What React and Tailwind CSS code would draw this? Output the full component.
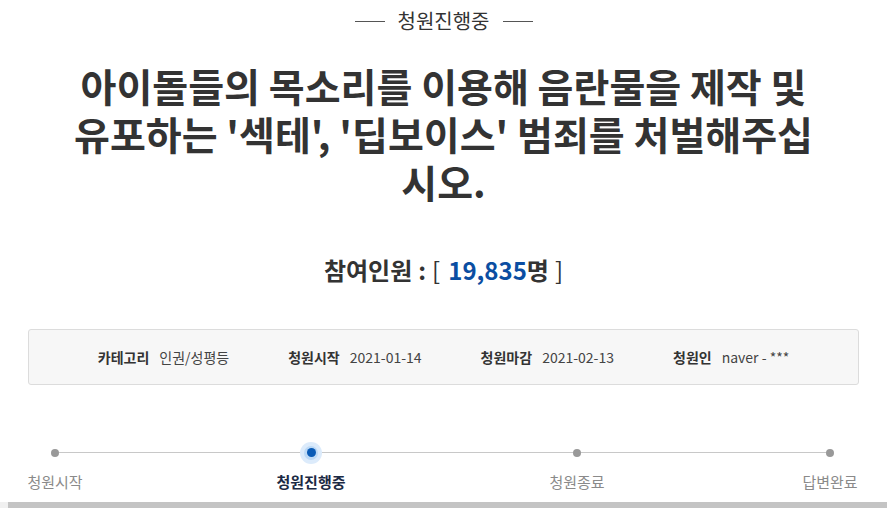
const steps = [
  { label: '청원시작', state: 'done', ml: 'ml-[17px]' },
  { label: '청원진행중', state: 'active', ml: 'ml-[180px]' },
  { label: '청원종료', state: 'todo', ml: 'ml-[190px]' },
  { label: '답변완료', state: 'todo', ml: 'ml-[177px]' },
];

const info = [
  { k: '카테고리', v: '인권/성평등' },
  { k: '청원시작', v: '2021-01-14' },
  { k: '청원마감', v: '2021-02-13' },
  { k: '청원인', v: 'naver - ***' },
];

export default function App() {
  return (
    <div
      className="w-[887px] h-[508px] overflow-hidden bg-white text-[#333]"
      style={{ fontFamily: '"Noto Sans CJK KR", "Noto Sans", sans-serif' }}
    >
      {/* status */}
      <div className="flex items-center justify-center gap-[13px] pt-[6px] h-[36px]">
        <span className="w-[30px] h-px bg-[#555]" />
        <span className="text-[20px] leading-[28px] text-[#333]">청원진행중</span>
        <span className="w-[30px] h-px bg-[#555]" />
      </div>

      {/* title */}
      <h1 className="mx-auto mt-[25px] w-[800px] text-center text-[39px] leading-[48px] font-bold text-[#333]">
        아이돌들의 목소리를 이용해 음란물을 제작 및<br />
        유포하는 '섹테', '딥보이스' 범죄를 처벌해주십<br />
        시오.
      </h1>

      {/* count */}
      <div className="mt-[49px] flex justify-center items-baseline text-[24px] leading-[32px] font-bold text-[#333]">
        <span>참여인원</span>
        <span className="ml-[6px]">:</span>
        <span className="ml-[6px] font-normal">[</span>
        <span className="ml-[8px] text-[#0b4ea2]">19,835</span>
        <span>명</span>
        <span className="ml-[6px] font-normal">]</span>
      </div>

      {/* info box */}
      <div className="mx-[28px] mt-[43px] h-[56px] rounded-[3px] border border-[#dcdcdc] bg-[#f7f7f7] flex items-center justify-center gap-[59px] text-[14px]">
        {info.map((it) => (
          <div key={it.k} className="flex items-center gap-[10px]">
            <span className="font-bold text-[#333]">{it.k}</span>
            <span className="text-[#444]">{it.v}</span>
          </div>
        ))}
      </div>

      {/* progress */}
      <div className="relative mt-[49px] h-[60px]">
        <div className="absolute left-[55px] right-[57px] top-[18px] h-px bg-[#c8c8c8]" />
        <div className="relative flex">
          {steps.map((s) => (
            <div key={s.label} className={`${s.ml} flex flex-col items-center w-[76px]`}>
              <div className="h-[37px] flex items-center justify-center">
                {s.state === 'active' ? (
                  <span className="w-[22px] h-[22px] rounded-full bg-[#dcebfb] flex items-center justify-center">
                    <span className="w-[14px] h-[14px] rounded-full bg-[#bcd9f6] flex items-center justify-center">
                      <span className="w-[9px] h-[9px] rounded-full bg-[#0a5bb6]" />
                    </span>
                  </span>
                ) : (
                  <span className="w-[8px] h-[8px] rounded-full bg-[#999]" />
                )}
              </div>
              <span
                className={
                  s.state === 'active'
                    ? 'mt-px text-[15px] leading-[20px] font-bold text-[#1c2a44] whitespace-nowrap'
                    : 'mt-px text-[15px] leading-[20px] text-[#8a8a8a] whitespace-nowrap'
                }
              >
                {s.label}
              </span>
            </div>
          ))}
        </div>
      </div>

      {/* bottom strip */}
      <div className="mt-[8px] flex h-[6px]">
        <div className="w-[8px] bg-[#f0f0f0]" />
        <div className="flex-1 bg-[#c4c4c4]" />
      </div>
    </div>
  );
}
